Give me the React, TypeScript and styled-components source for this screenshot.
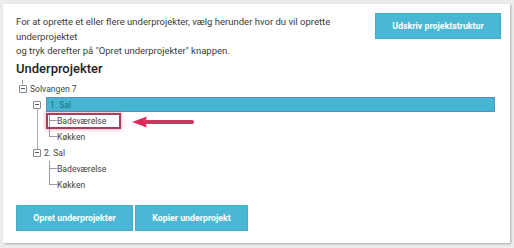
import React from "react";
import styled, { createGlobalStyle } from "styled-components";

const Global = createGlobalStyle`
  html, body { margin: 0; padding: 0; background: #ececec; }
  body { font-family: Roboto, "Liberation Sans", Arial, sans-serif; }
`;

type Node = { label: string; selected?: boolean; marked?: boolean; children?: Node[] };

const tree: Node = {
  label: "Solvangen 7",
  children: [
    {
      label: "1. Sal",
      selected: true,
      children: [{ label: "Badeværelse", marked: true }, { label: "Køkken" }],
    },
    {
      label: "2. Sal",
      children: [{ label: "Badeværelse" }, { label: "Køkken" }],
    },
  ],
};

const App = () => {
  return (
    <Page>
      <Global />
      <Card>
        <Header>
          <Intro>
            For at oprette et eller flere underprojekter, vælg herunder hvor du vil oprette
            <br />
            underprojektet
            <br />
            og tryk derefter på "Opret underprojekter" knappen.
          </Intro>
          <Button w={126}>Udskriv projektstruktur</Button>
        </Header>
        <Title>Underprojekter</Title>
        <Tree>
          <Row root>
            <Toggle />
            <Label>{tree.label}</Label>
          </Row>
          <Level>
            {tree.children!.map((sal) => (
              <Branch key={sal.label}>
                <Row>
                  <Toggle />
                  <Label selected={sal.selected}>{sal.label}</Label>
                </Row>
                <Leaves>
                  {sal.children!.map((room) => (
                    <Leaf key={room.label} marked={room.marked}>
                      <Tick />
                      <Label>{room.label}</Label>
                      {room.marked && <Arrow />}
                    </Leaf>
                  ))}
                </Leaves>
              </Branch>
            ))}
          </Level>
        </Tree>
        <Actions>
          <Button w={117}>Opret underprojekter</Button>
          <Button w={113}>Kopier underprojekt</Button>
        </Actions>
      </Card>
    </Page>
  );
};

const Arrow = () => (
  <ArrowSvg width="66" height="14" viewBox="0 0 66 14">
    <path d="M16 7 H62" stroke="#c9375c" strokeWidth="4" strokeLinecap="round" />
    <path d="M2 7 L17 1.5 L15 7 L17 12.5 Z" fill="#e0295a" />
  </ArrowSvg>
);

export default App;

const Page = styled.div`
  width: 514px;
  height: 248px;
  padding: 4px 0 0 3px;
  box-sizing: border-box;
`;
const Card = styled.div`
  width: 507px;
  height: 239px;
  background: #fff;
  box-shadow: 1px 1px 2px rgba(0, 0, 0, 0.28);
  padding: 9px 9px 12px 13px;
  box-sizing: border-box;
  display: flex;
  flex-direction: column;
`;
const Header = styled.div`
  display: flex;
  justify-content: space-between;
  align-items: flex-start;
`;
const Intro = styled.p`
  margin: 2px 0 0;
  font-size: 9.5px;
  line-height: 14.5px;
  color: #3a3a3a;
  white-space: nowrap;
`;
const Button = styled.button<{ w: number }>`
  height: 26px;
  width: ${(p) => p.w}px;
  padding: 0;
  border: 1px solid #44acc8;
  background: #49b8d4;
  color: #fff;
  font-family: Roboto, "Liberation Sans", Arial, sans-serif;
  font-size: 8.8px;
  font-weight: 700;
  cursor: pointer;
`;
const Title = styled.h2`
  margin: 1px 0 0;
  font-size: 13px;
  font-weight: 500;
  color: #222;
  line-height: 18px;
`;
const Tree = styled.div`
  margin-top: 3px;
  font-size: 8.6px;
  color: #444;
`;
const Row = styled.div<{ root?: boolean }>`
  position: relative;
  display: flex;
  align-items: center;
  height: 16px;
  margin-left: 3px;
  &::before {
    content: "";
    display: ${(p) => (p.root ? "block" : "none")};
    position: absolute;
    left: 3px;
    top: -1px;
    height: 4px;
    border-left: 1px solid #9a9a9a;
  }
`;
const Toggle = styled.span`
  position: relative;
  width: 6px;
  height: 6px;
  border: 1px solid #8a8a8a;
  border-radius: 1px;
  background: #fff;
  flex: none;
  margin-right: 3px;
  &::after {
    content: "";
    position: absolute;
    left: 1px;
    right: 1px;
    top: 2.5px;
    height: 1px;
    background: #555;
  }
`;
const Label = styled.span<{ selected?: boolean }>`
  display: flex;
  align-items: center;
  box-sizing: border-box;
  height: ${(p) => (p.selected ? "15px" : "auto")};
  flex: ${(p) => (p.selected ? "1" : "none")};
  margin-left: ${(p) => (p.selected ? "2px" : "0")};
  margin-right: ${(p) => (p.selected ? "6px" : "0")};
  padding: ${(p) => (p.selected ? "0 3px" : "0")};
  background: ${(p) => (p.selected ? "#45b5d2" : "transparent")};
  border: ${(p) => (p.selected ? "1px solid #5b8ec0" : "none")};
  color: ${(p) => (p.selected ? "#23708a" : "#444")};
`;
const Level = styled.div`
  margin-left: 14px;
`;
const Branch = styled.div`
  position: relative;
  &:first-child::before {
    content: "";
    position: absolute;
    left: 7px;
    top: 12px;
    height: 44px;
    border-left: 1px solid #b0b0b0;
  }
`;
const Leaves = styled.div`
  position: relative;
  margin-left: 19px;
  &::before {
    content: "";
    position: absolute;
    left: 0;
    top: 0;
    height: 24px;
    border-left: 1px solid #9a9a9a;
  }
`;
const Leaf = styled.div<{ marked?: boolean }>`
  position: relative;
  display: flex;
  align-items: center;
  box-sizing: border-box;
  width: ${(p) => (p.marked ? "75px" : "auto")};
  height: 16px;
  margin-left: ${(p) => (p.marked ? "-3px" : "0")};
  padding-left: ${(p) => (p.marked ? "1px" : "0")};
  border: ${(p) => (p.marked ? "2px solid #a3405c" : "none")};
  box-shadow: ${(p) => (p.marked ? "0 0 3px 1px rgba(230, 70, 110, 0.4)" : "none")};
`;
const Tick = styled.span`
  width: 8px;
  border-top: 1px solid #9a9a9a;
  flex: none;
`;
const ArrowSvg = styled.svg`
  position: absolute;
  left: 82px;
  top: 0;
`;
const Actions = styled.div`
  display: flex;
  gap: 2px;
  margin-top: auto;
`;
